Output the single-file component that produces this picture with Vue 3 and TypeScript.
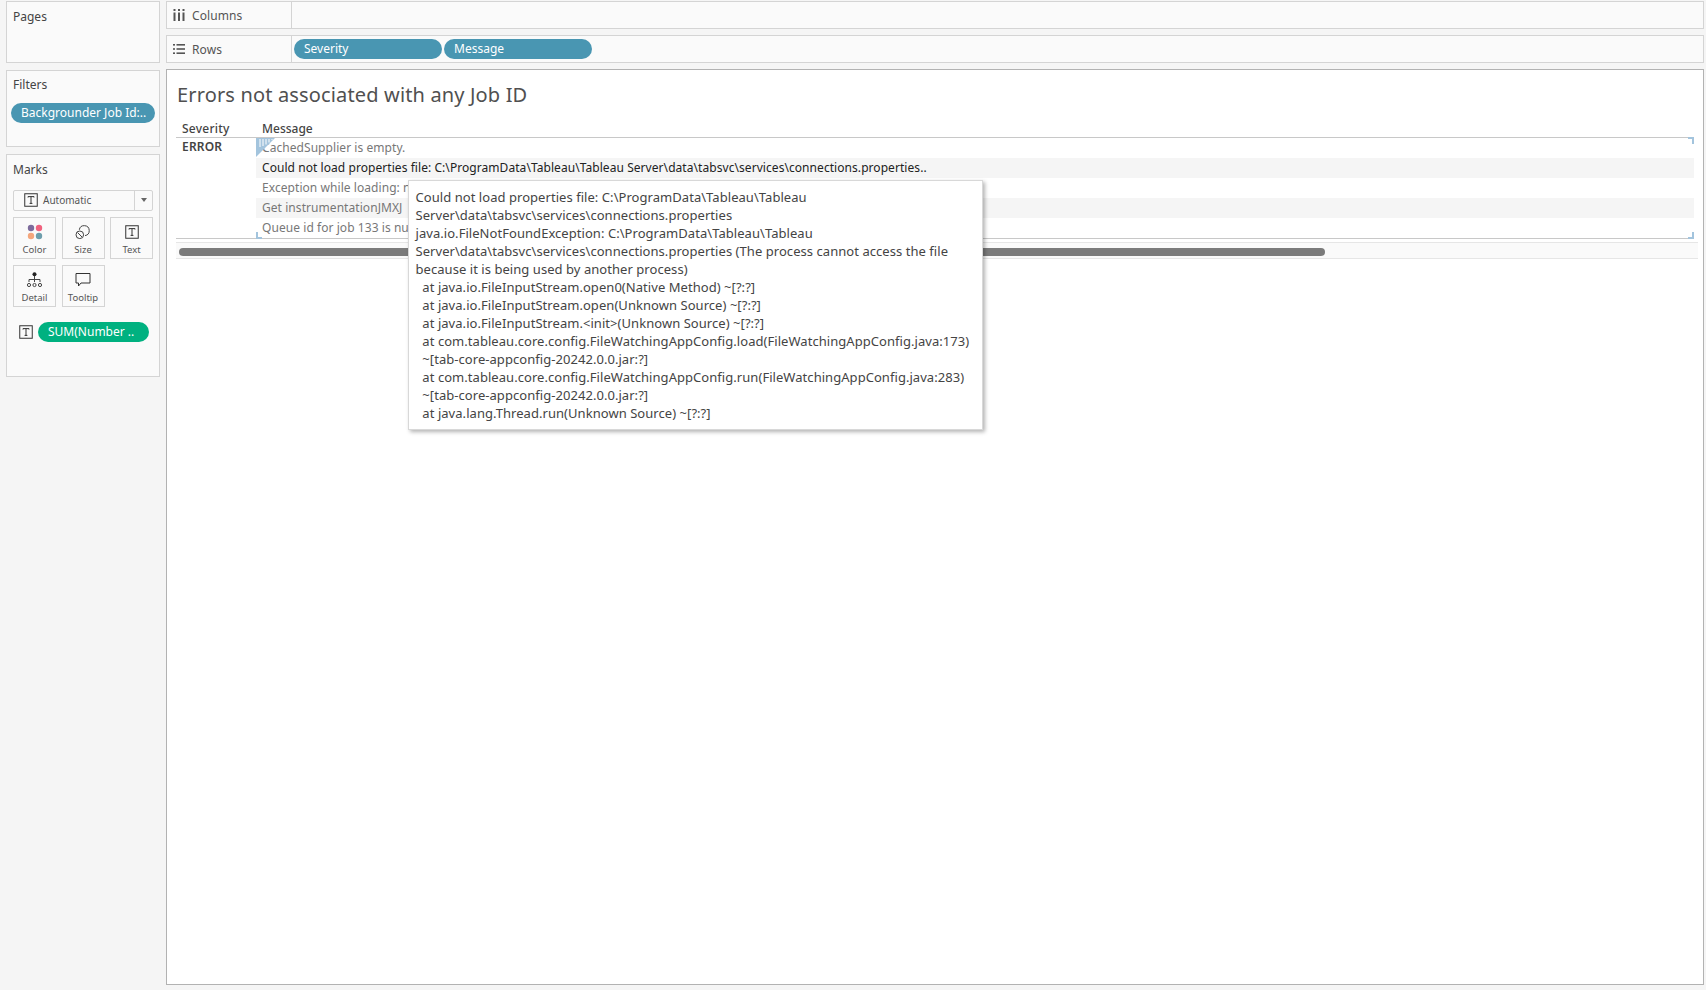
<script setup lang="ts">
const rows = [
  { text: 'CachedSupplier is empty.', cls: '' },
  { text: 'Could not load properties file: C:\\ProgramData\\Tableau\\Tableau Server\\data\\tabsvc\\services\\connections.properties..', cls: 'band active' },
  { text: 'Exception while loading: null', cls: '' },
  { text: 'Get instrumentationJMXJ', cls: 'band' },
  { text: 'Queue id for job 133 is null', cls: '' },
]
const tipLines = [
  'Could not load properties file: C:\\ProgramData\\Tableau\\Tableau',
  'Server\\data\\tabsvc\\services\\connections.properties',
  'java.io.FileNotFoundException: C:\\ProgramData\\Tableau\\Tableau',
  'Server\\data\\tabsvc\\services\\connections.properties (The process cannot access the file',
  'because it is being used by another process)',
  '  at java.io.FileInputStream.open0(Native Method) ~[?:?]',
  '  at java.io.FileInputStream.open(Unknown Source) ~[?:?]',
  '  at java.io.FileInputStream.<init>(Unknown Source) ~[?:?]',
  '  at com.tableau.core.config.FileWatchingAppConfig.load(FileWatchingAppConfig.java:173)',
  '  ~[tab-core-appconfig-20242.0.0.jar:?]',
  '  at com.tableau.core.config.FileWatchingAppConfig.run(FileWatchingAppConfig.java:283)',
  '  ~[tab-core-appconfig-20242.0.0.jar:?]',
  '  at java.lang.Thread.run(Unknown Source) ~[?:?]',
]
</script>

<template>
  <div class="page">
    <aside class="side">
      <section class="panel pages"><h2>Pages</h2></section>
      <section class="panel filters">
        <h2>Filters</h2>
        <div class="pill blue filter-pill">Backgrounder Job Id:..</div>
      </section>
      <section class="panel marks">
        <h2>Marks</h2>
        <div class="mark-select">
          <div class="mark-select-main">
            <svg class="t-icon" width="14" height="14" viewBox="0 0 14 14"><rect x="0.75" y="0.75" width="12.5" height="12.5" fill="none" stroke="#333" stroke-width="1"/><path d="M4 4.5V3.6h6v.9M7 3.6v6.8M5.6 10.4h2.8" fill="none" stroke="#333" stroke-width="1"/></svg>
            <span>Automatic</span>
          </div>
          <div class="mark-select-arrow"><i></i></div>
        </div>
        <div class="mark-grid">
          <div class="mark-btn">
            <svg width="16" height="16" viewBox="0 0 16 16"><circle cx="4" cy="4" r="3.2" fill="#7d6b9c"/><circle cx="12" cy="4" r="3.2" fill="#f0627e"/><circle cx="4" cy="12" r="3.2" fill="#f4a67c"/><circle cx="12" cy="12" r="3.2" fill="#6d9eac"/></svg>
            <span>Color</span>
          </div>
          <div class="mark-btn">
            <svg width="16" height="16" viewBox="0 0 16 16" fill="none" stroke="#444" stroke-width="1"><path d="M4.3 5.8A5 5 0 1 1 10 11.6"/><circle cx="4.8" cy="10.8" r="3.8"/><path d="M2.6 8.6l4.4 4.4"/></svg>
            <span>Size</span>
          </div>
          <div class="mark-btn">
            <svg class="t-icon" width="14" height="14" viewBox="0 0 14 14"><rect x="0.75" y="0.75" width="12.5" height="12.5" fill="none" stroke="#333" stroke-width="1"/><path d="M4 4.5V3.6h6v.9M7 3.6v6.8M5.6 10.4h2.8" fill="none" stroke="#333" stroke-width="1"/></svg>
            <span>Text</span>
          </div>
          <div class="mark-btn">
            <svg width="15" height="16" viewBox="0 0 15 16" fill="none" stroke="#444" stroke-width="1"><circle cx="7.5" cy="2.2" r="2" fill="#222" stroke="none"/><path d="M7.5 4v6M2 10V7.5h11V10"/><circle cx="2" cy="13" r="1.6"/><circle cx="7.5" cy="13" r="1.6"/><circle cx="13" cy="13" r="1.6"/></svg>
            <span>Detail</span>
          </div>
          <div class="mark-btn">
            <svg width="16" height="16" viewBox="0 0 16 16" fill="none" stroke="#333" stroke-width="1"><path d="M1 1.5h14v9.5H6l-2.5 3v-3H1z"/></svg>
            <span>Tooltip</span>
          </div>
        </div>
        <div class="mark-field">
          <svg class="t-icon" width="14" height="14" viewBox="0 0 14 14"><rect x="0.75" y="0.75" width="12.5" height="12.5" fill="none" stroke="#333" stroke-width="1"/><path d="M4 4.5V3.6h6v.9M7 3.6v6.8M5.6 10.4h2.8" fill="none" stroke="#333" stroke-width="1"/></svg>
          <div class="pill green">SUM(Number ..</div>
        </div>
      </section>
    </aside>

    <main class="main">
      <div class="shelf">
        <div class="shelf-label">
          <svg width="12" height="12" viewBox="0 0 12 12" fill="#555"><rect x="0.5" y="3.5" width="2" height="8.5"/><rect x="5" y="3.5" width="2" height="8.5"/><rect x="9.5" y="3.5" width="2" height="8.5"/><rect x="0.5" y="0" width="2" height="2"/><rect x="5" y="0" width="2" height="2"/><rect x="9.5" y="0" width="2" height="2"/></svg>
          <span>Columns</span>
        </div>
        <div class="shelf-body"></div>
      </div>
      <div class="shelf">
        <div class="shelf-label">
          <svg width="12" height="12" viewBox="0 0 12 10" fill="#555"><rect x="0" y="0" width="2" height="1.6"/><rect x="3.5" y="0" width="8.5" height="1.6"/><rect x="0" y="4.2" width="2" height="1.6"/><rect x="3.5" y="4.2" width="8.5" height="1.6"/><rect x="0" y="8.4" width="2" height="1.6"/><rect x="3.5" y="8.4" width="8.5" height="1.6"/></svg>
          <span>Rows</span>
        </div>
        <div class="shelf-body">
          <div class="pill blue shelf-pill">Severity</div>
          <div class="pill blue shelf-pill">Message</div>
        </div>
      </div>

      <section class="view">
        <h1>Errors not associated with any Job ID</h1>
        <div class="table">
          <div class="thead">
            <div class="col-sev sev-head">Severity</div>
            <div class="col-msg">Message</div>
          </div>
          <div class="tbody">
            <div class="col-sev sev-cell">ERROR</div>
            <div class="msgs">
              <div v-for="r in rows" :key="r.text" class="msg" :class="r.cls">{{ r.text }}</div>
              <svg class="mark tl" width="20" height="20" viewBox="0 0 20 20">
                <path d="M0 0H19L0 19Z" fill="#a3c4dd"/>
                <path d="M4 1V9M7 1V8M10 1V6.5M13 1V4.5M16 1V2" stroke="#fff" stroke-width="1"/>
              </svg>
              <span class="mark tr"></span>
              <span class="mark bl"></span>
              <span class="mark br"></span>
            </div>
          </div>
          <div class="scroll"><div class="thumb"></div></div>
        </div>
        <div class="tooltip">
          <div v-for="(l, i) in tipLines" :key="i" class="tip-line">{{ l }}</div>
        </div>
      </section>
    </main>
  </div>
</template>

<style>
html, body { margin: 0; background: #f5f5f5; }
</style>

<style scoped>
.page {
  width: 1706px;
  height: 990px;
  box-sizing: border-box;
  padding: 1px 2px 5px 6px;
  display: grid;
  grid-template-columns: 154px 1538px;
  column-gap: 6px;
  background: #f5f5f5;
  font-family: "Noto Sans", "Open Sans", sans-serif;
  color: #444;
  overflow: hidden;
}
.side { display: flex; flex-direction: column; gap: 7px; }
.panel {
  box-sizing: border-box;
  background: #fafafa;
  border: 1px solid #d4d4d4;
  padding: 7px 6px 0;
}
.panel h2 { margin: 0; font-size: 12px; font-weight: 400; line-height: 16px; color: #444; }
.pages { height: 62px; }
.filters { height: 77px; padding: 6px 4px 0; }
.filters h2 { padding-left: 2px; }
.marks { height: 223.5px; margin-top: -0.5px; }
.pill {
  box-sizing: border-box;
  height: 20px;
  line-height: 20px;
  border-radius: 10px;
  color: #fff;
  font-size: 12px;
  white-space: nowrap;
  overflow: hidden;
}
.blue { background: #4996b2; }
.green { background: #00b180; }
.filter-pill { margin-top: 10px; width: 144px; padding-left: 10px; }
.mark-select {
  margin-top: 12px;
  height: 21px;
  width: 140px;
  box-sizing: border-box;
  border: 1px solid #d4d4d4;
  border-radius: 2px;
  display: flex;
  background: #fafafa;
}
.mark-select-main {
  flex: 1;
  display: flex;
  align-items: center;
  gap: 5px;
  padding-left: 10px;
  font-size: 10px;
  color: #555;
  border-right: 1px solid #d4d4d4;
}
.mark-select-arrow { width: 17px; display: flex; align-items: center; justify-content: center; }
.mark-select-arrow i {
  width: 0; height: 0;
  border-left: 3.5px solid transparent;
  border-right: 3.5px solid transparent;
  border-top: 4px solid #666;
}
.t-icon { flex: none; }
.mark-grid {
  margin-top: 6px;
  display: grid;
  grid-template-columns: 43px 43px 43px;
  grid-auto-rows: 42.5px;
  column-gap: 5.5px;
  row-gap: 5.5px;
  width: 140px;
}
.mark-btn {
  box-sizing: border-box;
  border: 1px solid #d4d4d4;
  display: flex;
  flex-direction: column;
  align-items: center;
  padding-top: 6px;
  font-size: 9.5px;
  color: #555;
}
.mark-btn svg { height: 16px; }
.mark-btn span { margin-top: 4px; line-height: 12px; }
.mark-field {
  margin-top: 15px;
  padding-left: 6px;
  display: flex;
  align-items: center;
  gap: 5px;
}
.mark-field .green { width: 111px; padding-left: 10px; }

.main { display: flex; flex-direction: column; }
.shelf {
  box-sizing: border-box;
  height: 28px;
  margin-bottom: 6px;
  background: #fafafa;
  border: 1px solid #d4d4d4;
  display: flex;
}
.shelf-label {
  box-sizing: border-box;
  width: 125px;
  flex: none;
  border-right: 1px solid #d4d4d4;
  display: flex;
  align-items: center;
  gap: 7px;
  padding-left: 6px;
  font-size: 12px;
  letter-spacing: 0.1px;
  color: #555;
}
.shelf-body { flex: 1; display: flex; align-items: center; gap: 2px; padding-left: 2px; }
.shelf-pill { width: 148px; padding-left: 10px; }
.view {
  position: relative;
  flex: 1;
  box-sizing: border-box;
  background: #fff;
  border: 1px solid #b2b2b2;
  padding: 0 9px;
}
.view h1 {
  margin: 12px 0 0 1px;
  font-size: 20px;
  font-weight: 400;
  letter-spacing: 0.15px;
  line-height: 26px;
  color: #505050;
}
.table { margin-top: 11px; width: 1518px; }
.thead {
  display: flex;
  height: 19px;
  box-sizing: border-box;
  border-bottom: 1px solid #c8c8c8;
  font-size: 12px;
  line-height: 20px;
  color: #444;
  font-weight: 500;
}
.col-sev { width: 80px; flex: none; padding-left: 6px; box-sizing: border-box; }
.col-msg { padding-left: 6px; }
.sev-head { letter-spacing: 0.25px; }
.tbody { display: flex; height: 100px; border-bottom: 1px solid #c8c8c8; }
.sev-cell { font-size: 12px; letter-spacing: 0.2px; line-height: 18px; font-weight: 600; color: #444; }
.msgs { position: relative; flex: 1; }
.msg {
  height: 20px;
  line-height: 20px;
  padding-left: 6px;
  font-size: 12px;
  letter-spacing: 0.06px;
  color: #777;
  white-space: nowrap;
  overflow: hidden;
}
.band { background: #f5f5f5; }
.active { color: #222; }
.mark { position: absolute; }
.tl { left: 0; top: 0; }
.tr, .bl, .br { width: 6px; height: 7px; box-sizing: border-box; border: 0 solid #a3c4dd; }
.tr { right: 0; top: -1px; border-top-width: 2px; border-right-width: 2px; }
.bl { left: 0; bottom: -1px; border-bottom-width: 2px; border-left-width: 2px; }
.br { right: 0; bottom: -1px; border-bottom-width: 2px; border-right-width: 2px; }
.scroll {
  margin-top: 3px;
  height: 17px;
  width: 1522px;
  box-sizing: border-box;
  background: #fafafa;
  border-top: 1px solid #e6e6e6;
  border-bottom: 1px solid #e6e6e6;
  padding: 5px 0 0 3px;
}
.thumb { width: 1146px; height: 8px; border-radius: 4px; background: #7b7b7b; }
.tooltip {
  position: absolute;
  left: 241px;
  top: 110px;
  width: 575px;
  height: 250px;
  box-sizing: border-box;
  background: #fff;
  border: 1px solid #d8d8d8;
  box-shadow: 2px 2px 4px rgba(0, 0, 0, 0.3);
  padding: 6.5px 6.5px;
}
.tip-line {
  height: 18px;
  line-height: 18px;
  font-size: 13px;
  letter-spacing: 0.05px;
  white-space: pre;
  color: #444;
}
</style>
